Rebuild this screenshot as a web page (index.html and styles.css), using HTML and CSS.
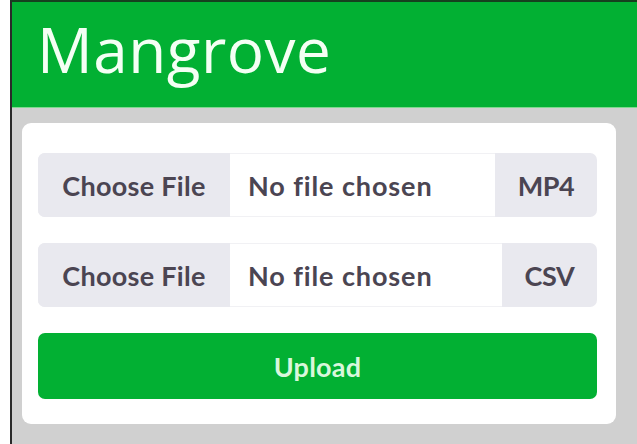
FILE: index.html
```html
<!DOCTYPE html>
<html lang="en">
<head>
<meta charset="utf-8">
<title>Mangrove</title>
<link rel="stylesheet" href="styles.css">
</head>
<body>
<div class="frame">
  <header class="site-header">
    <h1 class="brand">Mangrove</h1>
  </header>
  <main class="stage">
    <form class="upload-card">
      <div class="input-group">
        <span class="file-btn">Choose File</span>
        <span class="file-name">No file chosen</span>
        <span class="file-type">MP4</span>
      </div>
      <div class="input-group">
        <span class="file-btn">Choose File</span>
        <span class="file-name">No file chosen</span>
        <span class="file-type file-type-wide">CSV</span>
      </div>
      <button type="button" class="upload-btn">Upload</button>
    </form>
  </main>
</div>
</body>
</html>
```
FILE: styles.css
```css
html, body {
  margin: 0;
  height: 100%;
  background: #ffffff;
}

body {
  padding-left: 10px;
  box-sizing: border-box;
  font-family: "Lato", "Noto Sans", sans-serif;
}

.frame {
  height: 100%;
  display: flex;
  flex-direction: column;
  border-left: 2px solid #2a2a2a;
  border-top: 2px solid #16401f;
  background: #d0d0d0;
}

.site-header {
  height: 105px;
  background: #02b033;
  border-bottom: 1px solid #7fd98f;
  display: flex;
  align-items: center;
  padding-left: 25px;
}

.brand {
  margin: 0;
  color: #f4fff4;
  font-family: "Open Sans", "DejaVu Sans", sans-serif;
  font-weight: 400;
  font-size: 62px;
  letter-spacing: 0.5px;
  line-height: 1;
  transform: translateY(-6px);
}

.stage {
  flex: 1;
  padding: 15px 21px 0 10px;
}

.upload-card {
  background: #ffffff;
  border-radius: 9px;
  height: 301px;
  box-sizing: border-box;
  padding: 30px 19px 0 16px;
  display: flex;
  flex-direction: column;
  gap: 26px;
}

.input-group {
  display: flex;
  height: 64px;
  border-radius: 7px;
  overflow: hidden;
  background: #e9e9ef;
  color: #4b4552;
  font-size: 27px;
  font-weight: 700;
}

.input-group span {
  display: flex;
  align-items: center;
}

.file-btn {
  width: 192px;
  justify-content: center;
  background: #e9e9ef;
  letter-spacing: 0.3px;
}

.file-name {
  flex: 1;
  background: #ffffff;
  padding-left: 18px;
  letter-spacing: 0.9px;
  border-top: 1px solid #f1f1f4;
  border-bottom: 1px solid #f1f1f4;
}

.file-type {
  width: 102px;
  justify-content: center;
  letter-spacing: -0.4px;
}

.file-type-wide {
  width: 95px;
}

.upload-btn {
  height: 66px;
  border: none;
  border-radius: 7px;
  background: #02b033;
  color: #d9f7dc;
  font-family: "Lato", "Noto Sans", sans-serif;
  font-size: 27px;
  font-weight: 700;
  letter-spacing: 0.2px;
}
```
